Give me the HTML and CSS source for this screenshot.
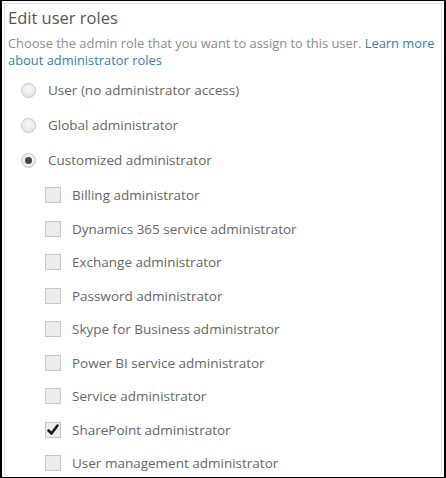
FILE: index.html
```html
<!DOCTYPE html>
<html>
<head>
<meta charset="utf-8">
<link rel="stylesheet" href="styles.css">
</head>
<body>
<div class="frame">
  <div class="panel">
    <h1 class="title">Edit user roles</h1>
    <p class="desc">Choose the admin role that you want to assign to this user. <a class="link" href="#">Learn more about administrator roles</a></p>
    <div class="radios">
      <label class="radio-row"><span class="radio"></span><span class="label">User (no administrator access)</span></label>
      <label class="radio-row"><span class="radio"></span><span class="label">Global administrator</span></label>
      <label class="radio-row"><span class="radio checked"></span><span class="label">Customized administrator</span></label>
    </div>
    <div class="checks">
      <div class="check-row"><span class="box"></span><span class="label">Billing administrator</span></div>
      <div class="check-row"><span class="box"></span><span class="label">Dynamics 365 service administrator</span></div>
      <div class="check-row"><span class="box"></span><span class="label">Exchange administrator</span></div>
      <div class="check-row"><span class="box"></span><span class="label">Password administrator</span></div>
      <div class="check-row"><span class="box"></span><span class="label">Skype for Business administrator</span></div>
      <div class="check-row"><span class="box"></span><span class="label">Power BI service administrator</span></div>
      <div class="check-row"><span class="box"></span><span class="label">Service administrator</span></div>
      <div class="check-row"><span class="box"><svg class="tick" viewBox="0 0 16 16" width="16" height="16"><path d="M3.5 8.5 L6.5 11.5 L12.5 3.5" fill="none" stroke="#1a1a1a" stroke-width="2.6" stroke-linecap="round" stroke-linejoin="round"/></svg></span><span class="label">SharePoint administrator</span></div>
      <div class="check-row"><span class="box"></span><span class="label">User management administrator</span></div>
    </div>
  </div>
</div>
</body>
</html>
```

FILE: styles.css
```css
html, body {
  margin: 0;
  padding: 0;
  background: #000;
}
.frame {
  width: 442px;
  height: 476px;
  margin: 1px 2px 1px 2px;
  background: #fff;
  overflow: hidden;
  padding: 2px;
  box-sizing: border-box;
}
.panel {
  height: 100%;
  border: 1px solid #e4e4e4;
  border-bottom: none;
  box-sizing: border-box;
  padding: 2px 0 0 3px;
  font-family: "Open Sans", sans-serif;
}
.title {
  margin: 0;
  font-size: 16.5px;
  font-weight: 400;
  color: #555;
  line-height: 24px;
}
.desc {
  margin: 5px 0 0 0;
  font-size: 12.9px;
  line-height: 17px;
  color: #8c8c8c;
}
.link {
  color: #3a7cb0;
  text-decoration: none;
}
.radios {
  display: flex;
  flex-direction: column;
  gap: 19px;
  margin: 13px 0 0 13px;
}
.radio-row, .check-row {
  display: flex;
  align-items: center;
  height: 16px;
  font-size: 13.5px;
  color: #666;
}
.radio {
  width: 15px;
  height: 15px;
  border-radius: 50%;
  border: 1px solid #c4c4c4;
  background: radial-gradient(circle at 50% 40%, #f8f8f8, #e2e2e2);
  box-sizing: border-box;
  margin-right: 12px;
  display: flex;
  align-items: center;
  justify-content: center;
}
.radio.checked::after {
  content: "";
  width: 7px;
  height: 7px;
  border-radius: 50%;
  background: #444;
}
.checks {
  display: flex;
  flex-direction: column;
  gap: 17.5px;
  margin: 19px 0 0 37px;
}
.box {
  width: 16px;
  height: 16px;
  border: 1px solid #c8c8c8;
  background: #ececec;
  box-sizing: border-box;
  margin-right: 11px;
  position: relative;
  flex: none;
}
.tick {
  position: absolute;
  left: -1px;
  top: -1px;
}
.label {
  white-space: nowrap;
}
```
